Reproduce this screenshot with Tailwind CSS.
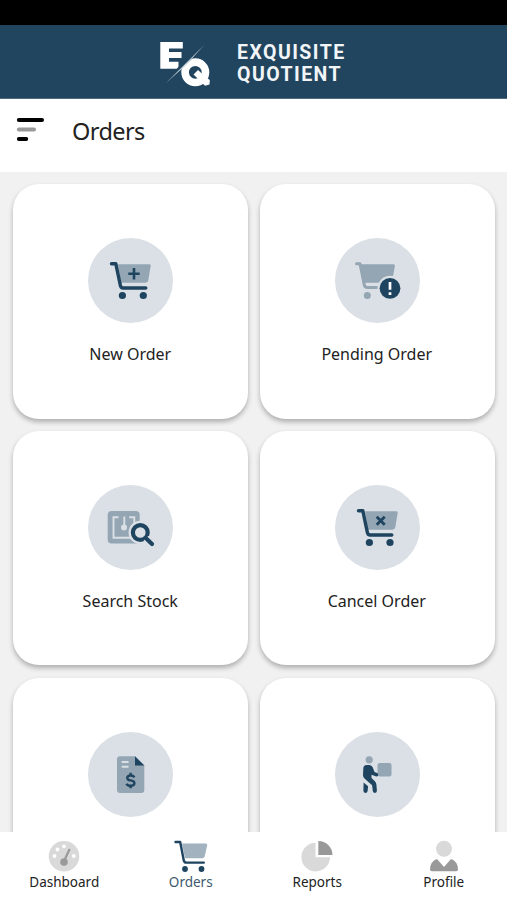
<!DOCTYPE html>
<html lang="en">
<head>
   <meta charset="UTF-8">
   <meta name="viewport" content="width=device-width, initial-scale=1.0">
   <script src="https://cdn.jsdelivr.net/npm/@tailwindcss/browser@4"></script>
   <title>Exquisite Quotient - Orders</title>
</head>
<body class="bg-[#f1f1f1] font-['Noto_Sans','Open_Sans',sans-serif] text-[#222]">
   <div class="flex flex-col w-[507px] h-[900px] overflow-hidden">
      <div class="h-[25px] bg-black shrink-0"></div>

      <!-- brand -->
      <div class="h-[74px] bg-[#21455f] border-b border-[#4d6a7e] shrink-0 flex items-start pl-[158px]">
         <svg class="w-[56px] h-[70px] shrink-0" viewBox="0 0 56 70">
            <path d="M2.300 17h22.500v6.600H11v3.500h12.500v6H11v3.600h9.500v7H2.300z" fill="#fff"/>
            <circle cx="37.300" cy="47.300" r="10.200" fill="none" stroke="#fff" stroke-width="7.600"/>
            <path d="M35.500 49.500l4.500-4.500 7 6.500 4.800 3.500-.300 4.500-4.500 1.300z" fill="#fff"/>
            <path d="M46.500 19.500L26.500 38.500 6.500 58.500" stroke="#21455f" stroke-width="3.600" fill="none"/>
            <path d="M46.500 19.800L8 58l19.500-17.500z" fill="#d3dde5"/>
         </svg>
         <div class="pt-[17px] pl-[23px] font-['Roboto',sans-serif] font-bold text-[19.500px] leading-[22px] text-[#f2f5f8] tracking-[1.450px]">
            <div>EXQUISITE</div>
            <div>QUOTIENT</div>
         </div>
      </div>

      <!-- page title -->
      <div class="h-[73px] bg-white shrink-0 flex">
         <svg class="w-[30px] h-[28px] mt-[17px] ml-[15px]" viewBox="0 0 30 28" fill="none" stroke-width="3.800" stroke-linecap="round">
            <path d="M3.800 4h23.300" stroke="#000"/>
            <path d="M3.800 13.500h15.300" stroke="#999"/>
            <path d="M3.800 23h7.500" stroke="#000"/>
         </svg>
         <h1 class="ml-[27px] mt-[14px] text-[23.500px] leading-[36px] tracking-[-0.600px]">Orders</h1>
      </div>

      <!-- menu cards -->
      <div class="grow min-h-0 overflow-hidden grid grid-cols-2 auto-rows-[234.500px] gap-x-[12.500px] gap-y-[12.400px] pl-[13px] pr-[12.500px] pt-[12px]">
         <div class="bg-white rounded-[26px] shadow-[0_3px_5px_rgba(0,0,0,0.28)] flex flex-col items-center pt-[54px]">
            <svg class="w-[85px] h-[85px]" viewBox="0 0 85 85">
               <circle cx="42.500" cy="42.500" r="42.500" fill="#dae0e5"/>
               <path d="M30 26.300h31.500q1.500 0 1.200 1.500l-2.400 14.500q-.400 2.400-2.800 2.400H33z" fill="#94a6b3"/>
               <path d="M23.500 25.700h4.300l4.500 21.500q.500 2.800 3 2.800h22.500" fill="none" stroke="#1e4460" stroke-width="3.400" stroke-linecap="round" stroke-linejoin="round"/>
               <circle cx="34.400" cy="57.500" r="3.600" fill="#1e4460"/>
               <circle cx="55.300" cy="57.500" r="3.600" fill="#1e4460"/>
               <path d="M40.300 35.800h11.400M46 30.100v11.400" stroke="#1e4460" stroke-width="2.600"/>
            </svg>
            <span class="mt-[19px] text-[16px] leading-[24px]">New Order</span>
         </div>

         <div class="bg-white rounded-[26px] shadow-[0_3px_5px_rgba(0,0,0,0.28)] flex flex-col items-center pt-[54px]">
            <svg class="w-[85px] h-[85px]" viewBox="0 0 85 85">
               <circle cx="42.500" cy="42.500" r="42.500" fill="#dae0e5"/>
               <path d="M26 26.300h32.500q1.700 0 1.400 1.500l-2.600 14.500q-.400 2.400-2.800 2.400H29z" fill="#94a6b3"/>
               <path d="M21.500 25.700h3.500l4.300 21.300q.500 2.600 3 2.600h10" fill="none" stroke="#94a6b3" stroke-width="3" stroke-linecap="round" stroke-linejoin="round"/>
               <circle cx="32.300" cy="57.500" r="3.500" fill="#94a6b3"/>
               <circle cx="55" cy="50.300" r="12.500" fill="#dae0e5"/>
               <circle cx="55" cy="50.300" r="10.400" fill="#1e4460"/>
               <path d="M55 44v7.800M55 54.300v2.600" stroke="#fff" stroke-width="2.700"/>
            </svg>
            <span class="mt-[19px] -ml-[1px] text-[16px] leading-[24px]">Pending Order</span>
         </div>

         <div class="bg-white rounded-[26px] shadow-[0_3px_5px_rgba(0,0,0,0.28)] flex flex-col items-center pt-[54px]">
            <svg class="w-[85px] h-[85px]" viewBox="0 0 85 85">
               <circle cx="42.500" cy="42.500" r="42.500" fill="#dae0e5"/>
               <rect x="19.700" y="26" width="32" height="32.500" rx="4" fill="#94a6b3"/>
               <path d="M30.500 32.300h-5v20.500h20.800v-20.500h-5M36.300 31.500v11" fill="none" stroke="#dae0e5" stroke-width="1.900"/>
               <circle cx="36" cy="42.500" r="3" fill="#dae0e5"/>
               <circle cx="52.300" cy="47.500" r="11.800" fill="#dae0e5"/>
               <circle cx="52.300" cy="47.500" r="7.400" fill="#dae0e5" stroke="#1e4460" stroke-width="4.200"/>
               <path d="M58 53.300l6 5.700" stroke="#dae0e5" stroke-width="7"/>
               <path d="M58 53.300l6 5.700" stroke="#1e4460" stroke-width="4.200" stroke-linecap="round"/>
            </svg>
            <span class="mt-[19px] text-[16px] leading-[24px]">Search Stock</span>
         </div>

         <div class="bg-white rounded-[26px] shadow-[0_3px_5px_rgba(0,0,0,0.28)] flex flex-col items-center pt-[54px]">
            <svg class="w-[85px] h-[85px]" viewBox="0 0 85 85">
               <circle cx="42.500" cy="42.500" r="42.500" fill="#dae0e5"/>
               <path d="M30 26.300h31.500q1.500 0 1.200 1.500l-2.400 14.500q-.400 2.400-2.800 2.400H33z" fill="#94a6b3"/>
               <path d="M23.500 25.700h4.300l4.500 21.500q.500 2.800 3 2.800h21.500" fill="none" stroke="#1e4460" stroke-width="3.400" stroke-linecap="round" stroke-linejoin="round"/>
               <circle cx="34.400" cy="57.500" r="3.600" fill="#1e4460"/>
               <circle cx="55" cy="57.500" r="3.600" fill="#1e4460"/>
               <path d="M41.700 31.700l8 8M49.700 31.700l-8 8" stroke="#1e4460" stroke-width="2.800"/>
            </svg>
            <span class="mt-[19px] -ml-[1px] text-[16px] leading-[24px]">Cancel Order</span>
         </div>

         <div class="bg-white rounded-[26px] shadow-[0_3px_5px_rgba(0,0,0,0.28)] flex flex-col items-center pt-[54px]">
            <svg class="w-[85px] h-[85px]" viewBox="0 0 85 85">
               <circle cx="42.500" cy="42.500" r="42.500" fill="#dae0e5"/>
               <path d="M32 24.200h15l9.300 9.300v24.500q0 3-3 3H32q-3 0-3-3V27.200q0-3 3-3z" fill="#94a6b3"/>
               <path d="M47 24.200l9.300 9.300H47z" fill="#1e4460"/>
               <path d="M33.700 30h6.800M33.700 34.800h6.800" stroke="#dae0e5" stroke-width="1.900"/>
               <path d="M46.400 45.300q-1-1.800-3.800-1.800-3.300 0-3.300 2.400 0 2 3.300 2.500 3.800.500 3.800 2.900 0 2.500-3.700 2.500-3.300 0-4.200-2.100M42.600 40.800v2.700M42.600 53.500v2.700" fill="none" stroke="#1e4460" stroke-width="2.400"/>
            </svg>
         </div>

         <div class="bg-white rounded-[26px] shadow-[0_3px_5px_rgba(0,0,0,0.28)] flex flex-col items-center pt-[54px]">
            <svg class="w-[85px] h-[85px]" viewBox="0 0 85 85">
               <circle cx="42.500" cy="42.500" r="42.500" fill="#dae0e5"/>
               <circle cx="34.200" cy="27.800" r="3.600" fill="#94a6b3"/>
               <rect x="42.500" y="31" width="14" height="13.500" rx="2" fill="#94a6b3"/>
               <path d="M28.300 36.500q0-3.500 3.500-3.500h2.500q2.500 0 3.500 2.500l1.700 4.500 2.700 1q1.500.8.900 2.400-.7 1.500-2.400.9l-4.200-1.600v3.300l3.400 3.200q1.300 1.300 1.500 3.300l.500 6.200q0 2-1.900 2.200-1.800 0-2.200-1.900l-.700-5.700-7.600-6.800q-1.500-1.500-1.500-3.500z" fill="#1e4460"/>
               <path d="M28.600 50.500l4.500 3.700-.5 4.900q-.3 1.900-2.200 1.900-2-.1-2-2.200z" fill="#1e4460"/>
            </svg>
         </div>
      </div>

      <!-- bottom nav -->
      <div class="h-[68px] bg-white shrink-0 grid grid-cols-4 pl-[1px] text-[13.500px] leading-[20px]">
         <div class="flex flex-col items-center pt-[8px]">
            <svg class="w-[32px] h-[32px]" viewBox="0 0 32 32">
               <circle cx="16" cy="16.300" r="15.300" fill="#d9d9d9"/>
               <g fill="#fff">
                  <circle cx="6.500" cy="16" r="1.900"/>
                  <circle cx="9.500" cy="9.500" r="1.900"/>
                  <circle cx="16" cy="6.300" r="1.900"/>
                  <circle cx="25.800" cy="16" r="1.900"/>
               </g>
               <path d="M21.300 9.800l-4.600 10" stroke="#999" stroke-width="2.200" stroke-linecap="round"/>
               <circle cx="16" cy="22" r="3.800" fill="#999"/>
            </svg>
            <span>Dashboard</span>
         </div>
         <div class="flex flex-col items-center pt-[8px]">
            <svg class="w-[36px] h-[32px]" viewBox="0 0 36 32">
               <path d="M9 3.500h23.500q2 0 1.700 1.800l-2.500 11q-.500 2-2.500 2H12z" fill="#a2b2be"/>
               <path d="M2.500 2h4.700l3.600 18.500q.400 2.100 2.500 2.100h17.500" fill="none" stroke="#1e4460" stroke-width="2.400" stroke-linecap="round" stroke-linejoin="round"/>
               <circle cx="12" cy="29" r="2.900" fill="#1e4460"/>
               <circle cx="28.500" cy="29" r="2.900" fill="#1e4460"/>
            </svg>
            <span class="text-[#40596f]">Orders</span>
         </div>
         <div class="flex flex-col items-center pt-[8px]">
            <svg class="w-[32px] h-[32px]" viewBox="0 0 32 32">
               <path d="M14.500 2.800v14.500h14.500A14.300 14.300 0 1 1 14.500 2.800z" fill="#d9d9d9"/>
               <path d="M17.300 1A14.300 14.300 0 0 1 31.500 15H17.300z" fill="#999"/>
            </svg>
            <span>Reports</span>
         </div>
         <div class="flex flex-col items-center pt-[8px]">
            <svg class="w-[32px] h-[32px]" viewBox="0 0 32 32">
               <circle cx="16" cy="8.800" r="8" fill="#d9d9d9"/>
               <path d="M9 19l7 8 7-8q7 2.500 7 10.500 0 1.700-1.700 1.700H3.700Q2 31.200 2 29.500 2 21.500 9 19z" fill="#999"/>
            </svg>
            <span>Profile</span>
         </div>
      </div>
   </div>
</body>
</html>
